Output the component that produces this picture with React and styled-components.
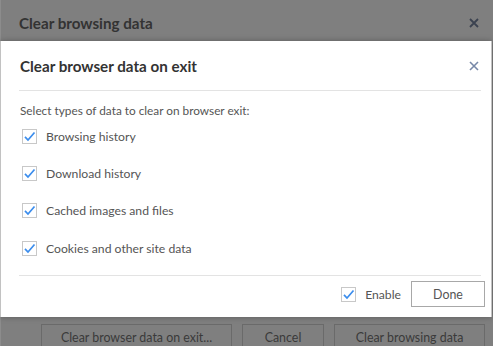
import React from "react";
import styled, { createGlobalStyle } from "styled-components";

const Global = createGlobalStyle`
  html, body { margin: 0; padding: 0; }
  body {
    width: 493px; height: 346px; overflow: hidden;
    font-family: "Lato", "Open Sans", sans-serif;
    background: #7f7f7f;
  }
`;

const Screen = styled.div`
  position: relative;
  width: 493px;
  height: 346px;
  overflow: hidden;
`;

const BackDialog = styled.div`
  display: flex;
  flex-direction: column;
  height: 346px;
  background: #7f7f7f;
  border-left: 1px solid #8c8c8c;
  box-sizing: border-box;
`;

const BackHeader = styled.div`
  display: flex;
  align-items: center;
  justify-content: space-between;
  height: 46px;
  padding: 0 14px 0 18px;
`;

const BackTitle = styled.div`
  font-size: 15.2px;
  font-weight: 700;
  color: #333333;
`;

const BackSpacer = styled.div`
  flex: 1;
`;

const BackFooter = styled.div`
  display: flex;
  justify-content: flex-end;
  gap: 10px;
  padding: 0 8px 0 0;
  margin-bottom: -4px;
`;

const BackButton = styled.div`
  width: ${(p) => p.w}px;
  height: 26px;
  box-sizing: border-box;
  border: 1px solid #6a6a6a;
  display: flex;
  align-items: center;
  justify-content: center;
  font-size: 12.4px;
  color: #3a3a3a;
`;

const Modal = styled.div`
  position: absolute;
  left: 0;
  top: 41px;
  width: 492px;
  height: 276px;
  box-sizing: border-box;
  background: #ffffff;
  border-left: 1px solid #c2c2c2;
  border-right: 1px solid #c2c2c2;
  box-shadow: 0 0 6px rgba(0, 0, 0, 0.28);
  display: flex;
  flex-direction: column;
  padding: 0 10px 0 18px;
`;

const ModalHeader = styled.div`
  display: flex;
  align-items: center;
  justify-content: space-between;
  height: 50px;
  border-bottom: 1px solid #e3e3e3;
  box-sizing: border-box;
  padding-left: 1px;
`;

const ModalTitle = styled.div`
  font-size: 15.2px;
  font-weight: 700;
  color: #333333;
  margin-top: 1px;
`;

const CloseBtn = styled.div`
  width: 20px;
  height: 20px;
  display: flex;
  align-items: center;
  justify-content: center;
  margin-right: -3px;
`;

const Body = styled.div`
  flex: 1;
  display: flex;
  flex-direction: column;
  padding-top: 10px;
  border-bottom: 1px solid #e3e3e3;
`;

const Intro = styled.div`
  font-size: 11.8px;
  color: #555555;
  height: 20px;
  line-height: 20px;
  padding-left: 1px;
`;

const Row = styled.label`
  display: flex;
  align-items: center;
  gap: 9px;
  height: 37.2px;
  padding-left: 3px;
  margin-top: ${(p) => (p.first ? "-3px" : "0")};
`;

const Box = styled.span`
  width: 15px;
  height: 15px;
  box-sizing: border-box;
  border: 1px solid #c8c8c8;
  background: #fff;
  display: inline-flex;
  align-items: center;
  justify-content: center;
`;

const Label = styled.span`
  font-size: 12.2px;
  color: #555555;
`;

const Footer = styled.div`
  display: flex;
  align-items: flex-start;
  justify-content: flex-end;
  height: 41px;
  flex-shrink: 0;
  padding-top: 5px;
  margin-right: -4px;
  box-sizing: border-box;
`;

const EnableRow = styled.label`
  display: flex;
  align-items: center;
  gap: 9px;
  height: 26px;
  margin-right: 10px;
`;

const DoneButton = styled.div`
  width: 74px;
  height: 26px;
  box-sizing: border-box;
  border: 1px solid #a8a8a8;
  display: flex;
  align-items: center;
  justify-content: center;
  font-size: 12.4px;
  color: #555555;
`;

const Check = () => (
  <Box>
    <svg width="13" height="13" viewBox="0 0 13 13">
      <path d="M2 6.8 L5 10 L11.5 2.5" fill="none" stroke="#3b8ded" strokeWidth="1.7" />
    </svg>
  </Box>
);

const items = [
  "Browsing history",
  "Download history",
  "Cached images and files",
  "Cookies and other site data",
];

export default function App() {
  return (
    <Screen>
      <Global />
      <BackDialog>
        <BackHeader>
          <BackTitle>Clear browsing data</BackTitle>
          <svg width="10" height="10" viewBox="0 0 10 10">
            <path d="M1 1 L9 9 M9 1 L1 9" stroke="#3b4250" strokeWidth="1.8" />
          </svg>
        </BackHeader>
        <BackSpacer />
        <BackFooter>
          <BackButton w={191}>Clear browser data on exit...</BackButton>
          <BackButton w={82}>Cancel</BackButton>
          <BackButton w={151}>Clear browsing data</BackButton>
        </BackFooter>
      </BackDialog>
      <Modal>
        <ModalHeader>
          <ModalTitle>Clear browser data on exit</ModalTitle>
          <CloseBtn>
            <svg width="10" height="10" viewBox="0 0 10 10">
              <path d="M1 1 L9 9 M9 1 L1 9" stroke="#7788a8" strokeWidth="1.6" />
            </svg>
          </CloseBtn>
        </ModalHeader>
        <Body>
          <Intro>Select types of data to clear on browser exit:</Intro>
          {items.map((t, i) => (
            <Row key={t} first={i === 0}>
              <Check />
              <Label>{t}</Label>
            </Row>
          ))}
        </Body>
        <Footer>
          <EnableRow>
            <Check />
            <Label>Enable</Label>
          </EnableRow>
          <DoneButton>Done</DoneButton>
        </Footer>
      </Modal>
    </Screen>
  );
}
